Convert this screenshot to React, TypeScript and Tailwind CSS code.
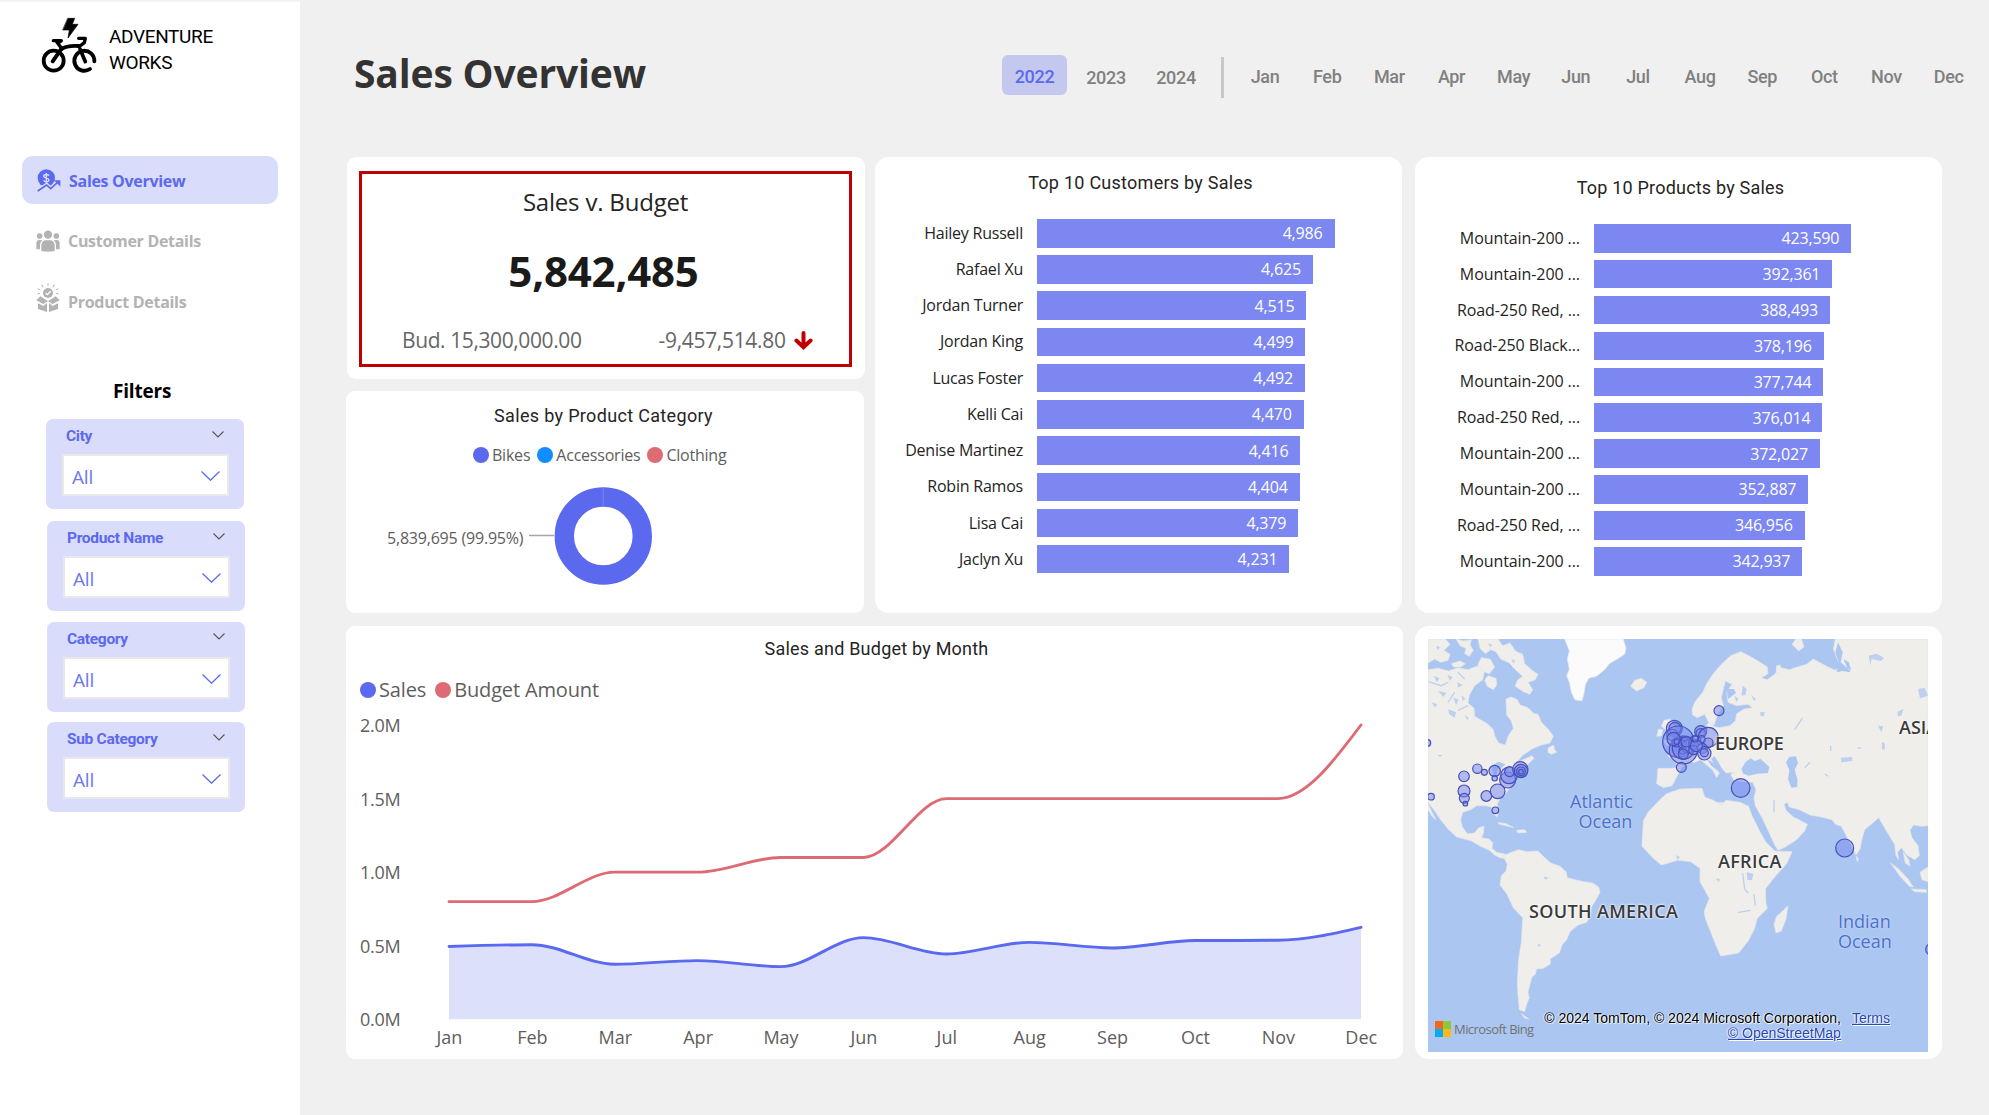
import React from 'react';

const MONTHS = ['Jan', 'Feb', 'Mar', 'Apr', 'May', 'Jun', 'Jul', 'Aug', 'Sep', 'Oct', 'Nov', 'Dec'];
const DIN = "font-['Roboto',sans-serif]";
const SEGOE = "font-['Open_Sans',sans-serif]";

/* ---------- Icons ---------- */

function BikeLogo() {
  return (
    <svg className="h-[60px] w-[60px]" viewBox="117 48 180 180" fill="none" stroke="#000" strokeLinecap="round" strokeLinejoin="round">
      <circle cx="161" cy="182" r="30" strokeWidth="11.5" />
      <path d="M283 184A30 30 0 1 0 270 207" strokeWidth="11.5" />
      <path d="M158 184L183 148Q200 136 236 138" strokeWidth="11.5" />
      <path d="M160 122H184L179 126L170 125L186 147" strokeWidth="10" />
      <path d="M236 115H256L253 128L240 138" strokeWidth="10" />
      <path d="M240 147L256 185" strokeWidth="11" />
      <path d="M204 55H224L217 73H234L204 114L208 90H189Z" fill="#000" strokeWidth="2" />
    </svg>
  );
}

function SalesIcon() {
  return (
    <svg className="h-6 w-6" viewBox="0 0 72 72" fill="none">
      <circle cx="28" cy="27" r="26" fill="#5b69ee" />
      <path d="M36 20C34 15 20 15 20 22C20 29 36 26 36 33C36 40 22 40 20 34M28 12V42" stroke="#dadcfb" strokeWidth="4" />
      <path d="M2 66L29 48L41 59L61 39" stroke="#dadcfb" strokeWidth="13" />
      <path d="M2 66L29 48L41 59L61 41" stroke="#5b69ee" strokeWidth="5" />
      <path d="M49 34H70V53L63 46L57 40Z" fill="#5b69ee" />
    </svg>
  );
}

function PeopleIcon() {
  return (
    <svg className="-ml-px h-6 w-6" viewBox="0 0 72 72" fill="#b3b3b3">
      <circle cx="36" cy="17" r="12.5" />
      <circle cx="11" cy="21" r="8.5" />
      <circle cx="61" cy="21" r="8.5" />
      <path d="M16 66V49Q18 34 30 34H42Q54 34 56 49V66Q36 70 16 66Z" />
      <path d="M1 61V41Q2 33 9 33H18Q12 41 12 50V61Z" />
      <path d="M71 61V41Q70 33 63 33H54Q60 41 60 50V61Z" />
    </svg>
  );
}

function BoxIcon() {
  return (
    <svg className="-mt-2 -ml-px h-[30px] w-6" viewBox="0 0 72 90" fill="#b3b3b3">
      <circle cx="36" cy="30" r="15" />
      <path d="M29 30L34 35L44 25" fill="none" stroke="#fff" strokeWidth="4" />
      <path d="M36 9V1M21 13L17 5M51 13L55 5M13 21L5 17M59 21L67 17M12 32H5M60 32H67" stroke="#b3b3b3" strokeWidth="3" />
      <path d="M36 55L13 40L1 52L22 63Z" />
      <path d="M36 55L59 40L71 52L50 63Z" />
      <path d="M6 61L22 69L33 60V87L6 78Z" />
      <path d="M66 61L50 69L39 60V87L66 78Z" />
    </svg>
  );
}

/* ---------- Sidebar ---------- */

function NavItem({ icon, label, active }: { icon: React.ReactNode; label: string; active?: boolean }) {
  return (
    <div
      className={`${SEGOE} flex h-12 w-64 items-center gap-2 rounded-[11px] pt-px pl-[15px] text-[16px] font-bold tracking-[-0.3px] ${
        active ? 'bg-[#dadcfb] text-[#5b69ee]' : 'text-[#b3b3b3]'
      }`}
    >
      {icon}
      <span>{label}</span>
    </div>
  );
}

function Filter({ label }: { label: string }) {
  return (
    <div className="h-[90px] w-[198px] rounded-[7px] bg-[#dadcfb] pt-[9px] pr-[15px] pl-4">
      <div className="flex h-4 items-center justify-between pr-[5px] pl-1">
        <span className={`${DIN} text-[15.5px] leading-4 font-bold tracking-[-0.3px] text-[#5b69ee]`}>{label}</span>
        <svg className="mb-1 h-[7px] w-3" viewBox="0 0 12 7" fill="none" stroke="#555" strokeWidth="1.1">
          <path d="M.5.5L6 6L11.5.5" />
        </svg>
      </div>
      <div className="mt-[10px] flex h-[42px] items-center justify-between border-2 border-[#e9e9ec] bg-white pr-[7px] pl-2">
        <span className={`${SEGOE} pt-1 text-[19px] leading-6 tracking-[-0.2px] text-[#6b78f0]`}>All</span>
        <svg className="mt-0.5 h-[10px] w-[19px]" viewBox="0 0 19 10" fill="none" stroke="#5b69ee" strokeWidth="1.3">
          <path d="M.5.5L9.5 9.2L18.5.5" />
        </svg>
      </div>
    </div>
  );
}

function Sidebar() {
  return (
    <aside className="flex h-full w-[300px] shrink-0 flex-col border-t-2 border-[#f3f3f3] bg-white">
      <div className="mt-[14px] ml-[39px] flex items-start gap-[10px]">
        <BikeLogo />
        <div className={`${DIN} pt-2 text-[19px] leading-[26px] tracking-[-0.35px] text-black`}>
          ADVENTURE
          <br />
          WORKS
        </div>
      </div>
      <nav className="mt-20 ml-[22px] flex flex-col gap-[12.5px]">
        <NavItem active icon={<SalesIcon />} label="Sales Overview" />
        <NavItem icon={<PeopleIcon />} label="Customer Details" />
        <NavItem icon={<BoxIcon />} label="Product Details" />
      </nav>
      <h2 className={`${SEGOE} mt-[54px] ml-[113px] text-[19px] leading-6 font-bold tracking-[-0.2px] text-black`}>Filters</h2>
      <div className="mt-4 ml-[46px] flex flex-col">
        <Filter label="City" />
        <div className="mt-3 ml-px flex flex-col gap-[10.5px]">
          <Filter label="Product Name" />
          <Filter label="Category" />
          <Filter label="Sub Category" />
        </div>
      </div>
    </aside>
  );
}

/* ---------- Header ---------- */

function Header() {
  return (
    <header className="flex h-[157px] shrink-0 items-start pl-[54px]">
      <h1 className={`${SEGOE} mt-[47px] w-[648px] text-[39px] leading-[52px] font-bold tracking-[-0.15px] text-[#333]`}>Sales Overview</h1>
      <div className={`${DIN} mt-[55px] flex text-[18px] font-medium tracking-[-0.35px] text-[#808080]`}>
        <div className="flex h-10 w-[65px] items-center justify-center rounded-md bg-[#c4c8ef] pt-[3px] text-[#5b69ee]">2022</div>
        <div className="flex h-10 w-[78px] items-center justify-center pt-1">2023</div>
        <div className="flex h-10 w-[62px] items-center justify-center pt-1">2024</div>
        <div className="mt-[2px] ml-[14px] h-[41px] w-[3px] bg-[#c8c8c8]" />
        <div className="ml-[10px] flex">
          {MONTHS.map((m) => (
            <div key={m} className="flex h-10 w-[62.15px] items-center justify-center pt-[3px]">
              {m}
            </div>
          ))}
        </div>
      </div>
    </header>
  );
}

/* ---------- Cards ---------- */

function KpiCard() {
  return (
    <section className="ml-px h-[222px] w-[518px] rounded-[9px] bg-white pt-[14px] pl-3">
      <div className={`${SEGOE} flex h-[196px] w-[493px] flex-col items-center border-3 border-[#c00000]`}>
        <div className="mt-3 text-[24px] leading-8 tracking-[-0.2px] text-[#252423]">Sales v. Budget</div>
        <div className="mt-[23px] pr-1 text-[42px] leading-[60px] font-bold tracking-[-0.2px] text-[#1a1a1a]">5,842,485</div>
        <div className="mt-[23px] flex w-full items-center pl-10 text-[21px] leading-8 tracking-[-0.4px] text-[#666]">
          <span>Bud. 15,300,000.00</span>
          <span className="ml-[77px] tracking-[-0.32px]">-9,457,514.80</span>
          <svg className="ml-2 h-[19px] w-[19px]" viewBox="0 0 19 19" fill="none" stroke="#c00000" strokeWidth="4" strokeLinecap="round">
            <path d="M9.5 2V15M2.4 9.5L9.5 16.2L16.6 9.5" />
          </svg>
        </div>
      </div>
    </section>
  );
}

function Legend({ color, label }: { color: string; label: string }) {
  return (
    <span className="flex items-center gap-[3px]">
      <span className={`size-4 rounded-full ${color}`} />
      <span>{label}</span>
    </span>
  );
}

function CategoryCard() {
  return (
    <section className="h-[222px] w-[518px] rounded-[9px] bg-white">
      <h3 className={`${DIN} pt-[13px] pr-[3px] text-center text-[18px] leading-6 tracking-[0.33px] text-[#252423]`}>Sales by Product Category</h3>
      <div className={`${SEGOE} mt-[15px] ml-[127px] flex gap-[7px] text-[16px] leading-6 tracking-[-0.22px] text-[#605e5c]`}>
        <Legend color="bg-[#5b69ee]" label="Bikes" />
        <Legend color="bg-[#118dff]" label="Accessories" />
        <Legend color="bg-[#de6a73]" label="Clothing" />
      </div>
      <div className="mt-[19px] flex items-center pl-[41px]">
        <span className={`${SEGOE} w-[142px] pt-[3px] text-[16px] tracking-[-0.2px] text-[#605e5c]`}>5,839,695 (99.95%)</span>
        <svg className="h-[100px] w-[125px]" viewBox="0 0 125 100" fill="none">
          <path d="M0 49.5H25" stroke="#a6a6a6" strokeWidth="1.5" />
          <circle cx="74.3" cy="50" r="39" stroke="#5b69ee" strokeWidth="19.4" />
          <path d="M74.3 1.5V20.5" stroke="#6d86f3" strokeWidth="1" />
        </svg>
      </div>
    </section>
  );
}

type Row = [string, number];

const CUSTOMERS: Row[] = [
  ['Hailey Russell', 4986],
  ['Rafael Xu', 4625],
  ['Jordan Turner', 4515],
  ['Jordan King', 4499],
  ['Lucas Foster', 4492],
  ['Kelli Cai', 4470],
  ['Denise Martinez', 4416],
  ['Robin Ramos', 4404],
  ['Lisa Cai', 4379],
  ['Jaclyn Xu', 4231],
];

const PRODUCTS: Row[] = [
  ['Mountain-200 ...', 423590],
  ['Mountain-200 ...', 392361],
  ['Road-250 Red, ...', 388493],
  ['Road-250 Black...', 378196],
  ['Mountain-200 ...', 377744],
  ['Road-250 Red, ...', 376014],
  ['Mountain-200 ...', 372027],
  ['Mountain-200 ...', 352887],
  ['Road-250 Red, ...', 346956],
  ['Mountain-200 ...', 342937],
];

function BarRow({ row, max, full, labelClass }: { row: Row; max: number; full: number; labelClass: string }) {
  const [label, value] = row;
  return (
    <div className="flex h-[28.5px] items-center">
      <span className={`${labelClass} shrink-0 pb-px text-right whitespace-nowrap text-[#252423]`}>{label}</span>
      <div
        className="flex h-full items-center justify-end bg-[#7c87f1] pr-[12px] tracking-[-0.18px] text-white"
        style={{ width: (value / max) * full }}
      >
        {value.toLocaleString('en-US')}
      </div>
    </div>
  );
}

function CustomersCard() {
  return (
    <section className="h-[456px] w-[527px] rounded-[14px] bg-white">
      <h3 className={`${DIN} pt-[14px] pl-1 text-center text-[18px] leading-6 tracking-[0.26px] text-[#252423]`}>Top 10 Customers by Sales</h3>
      <div className={`${SEGOE} mt-6 flex flex-col gap-[7.73px] text-[16px] leading-6`}>
        {CUSTOMERS.map((r) => (
          <BarRow key={r[0]} row={r} max={4986} full={297.5} labelClass="w-[148px] mr-[14px] tracking-[-0.22px]" />
        ))}
      </div>
    </section>
  );
}

function ProductsCard() {
  return (
    <section className="h-[456px] w-[527px] rounded-[14px] bg-white">
      <h3 className={`${DIN} pt-[19px] pl-[4px] text-center text-[18px] leading-6 tracking-[0.2px] text-[#252423]`}>Top 10 Products by Sales</h3>
      <div className={`${SEGOE} mt-6 flex flex-col gap-[7.4px] text-[16px] leading-6`}>
        {PRODUCTS.map((r, i) => (
          <BarRow key={i} row={r} max={423590} full={257.3} labelClass="w-[165px] mr-[14px] tracking-[-0.08px]" />
        ))}
      </div>
    </section>
  );
}

/* ---------- Line chart ---------- */

const BUDGET = [0.8, 0.8, 1.0, 1.0, 1.1, 1.1, 1.5, 1.5, 1.5, 1.5, 1.5, 2.0];
const SALES = [0.495, 0.507, 0.374, 0.399, 0.358, 0.555, 0.444, 0.523, 0.485, 0.535, 0.537, 0.625];
const PLOT_W = 912;
const PLOT_H = 294.3;

/* Monotone cubic interpolation through evenly spaced points. */
function curve(values: number[]): string {
  const dx = PLOT_W / (values.length - 1);
  const y = values.map((v) => PLOT_H - (v / 2) * PLOT_H);
  const n = y.length;
  const s = y.slice(1).map((v, i) => (v - y[i]) / dx);
  const t = y.map((_, i) => {
    if (i === 0 || i === n - 1) return 0;
    const a = s[i - 1];
    const b = s[i];
    if (a * b <= 0) return 0;
    return Math.sign(a) * 2 * Math.min(Math.abs(a), Math.abs(b), Math.abs(a + b) / 4);
  });
  t[0] = (3 * s[0] - t[1]) / 2;
  t[n - 1] = (3 * s[n - 2] - t[n - 2]) / 2;
  let d = `M0 ${y[0]}`;
  for (let i = 1; i < n; i++) {
    const x0 = (i - 1) * dx;
    const x1 = i * dx;
    d += `C${x0 + dx / 3} ${y[i - 1] + (t[i - 1] * dx) / 3} ${x1 - dx / 3} ${y[i] - (t[i] * dx) / 3} ${x1} ${y[i]}`;
  }
  return d;
}

function LineCard() {
  const sales = curve(SALES);
  return (
    <section className="h-[433px] w-[1057px] rounded-[9px] bg-white">
      <h3 className={`${DIN} pt-[11px] pl-[4px] text-center text-[18px] leading-6 tracking-[0.22px] text-[#252423]`}>Sales and Budget by Month</h3>
      <div className={`${SEGOE} mt-[15px] ml-[14px] flex gap-[9px] text-[20px] leading-7 tracking-[-0.15px] text-[#605e5c]`}>
        <Legend color="bg-[#5b69ee]" label="Sales" />
        <Legend color="bg-[#de6a73]" label="Budget Amount" />
      </div>
      <div className={`${SEGOE} mt-[9px] flex text-[18px] text-[#605e5c]`}>
        <div className="flex h-[318px] w-[103px] flex-col justify-between pl-[14px] leading-6 tracking-[-0.3px]">
          {['2.0M', '1.5M', '1.0M', '0.5M', '0.0M'].map((t) => (
            <span key={t}>{t}</span>
          ))}
        </div>
        <svg className="mt-[12px] h-[295px] w-[912px] overflow-visible" viewBox="0 0 912 295" fill="none">
          <path d={`${sales}V${PLOT_H}H0Z`} fill="#dde0fb" />
          <path d={curve(BUDGET)} stroke="#de6a73" strokeWidth="2.9" strokeLinecap="round" />
          <path d={sales} stroke="#5b69ee" strokeWidth="2.9" strokeLinecap="round" />
        </svg>
      </div>
      <div className={`${SEGOE} -mt-[6px] ml-[62px] flex text-[18px] leading-6 text-[#605e5c]`}>
        {MONTHS.map((m) => (
          <span key={m} className="w-[82.9px] text-center">
            {m}
          </span>
        ))}
      </div>
    </section>
  );
}

/* ---------- Map ---------- */

type Bubble = [number, number, number];

const AMERICAS: Bubble[] = [
  [-2, 312, 10], [108, 412, 16], [148, 389, 14], [169, 400, 9], [200, 396, 17], [200, 418, 8], [108, 456, 18],
  [109, 478, 15], [112, 494, 7], [9, 473, 10], [175, 471, 16], [209, 457, 22], [202, 514, 10], [239, 423, 24],
  [243, 409, 25], [245, 398, 15], [277, 391, 23], [279, 396, 20], [279, 397, 13], [279, 398, 7],
];

const EASTERN: Bubble[] = [
  [739, 268, 24], [741, 268, 18], [733, 288, 17], [751, 308, 47], [766, 333, 42], [766, 328, 33], [746, 310, 14],
  [763, 315, 12], [763, 335, 10], [781, 323, 20], [818, 278, 18], [818, 283, 14], [841, 295, 30], [801, 308, 18],
  [796, 318, 15], [821, 301, 11], [841, 311, 14], [823, 328, 15], [829, 343, 20], [829, 341, 12], [796, 333, 14],
  [760, 385, 15], [873, 215, 15], [938, 447, 28], [1250, 627, 27], [1510, 931, 17], [737, 300, 20], [746, 308, 8],
  [775, 308, 16], [805, 320, 18], [766, 345, 15], [801, 300, 9],
];

function WorldMap() {
  return (
    <svg className="size-full" viewBox="0 0 1500 1239">
      <rect width="1500" height="1239" fill="#abc6f1" />
      <g fill="#efeeeb" stroke="#e6e6ea" strokeWidth="2" strokeLinejoin="round">
        {/* North and Central America */}
        <path d="M0 92L30 88L62 96L90 86L120 92L150 80L170 92L164 122L140 140L124 168L120 192L138 208L140 232L178 254L196 272L200 290L212 312L232 318L240 292L256 268L250 246L236 228L234 180L250 174L268 182L276 198L300 206L318 224L330 226L340 250L362 272L376 292L366 312L340 318L312 330L282 350L262 376L282 364L312 350L318 358L298 378L282 382L290 402L262 412L250 440L236 460L216 480L208 494L212 522L206 534L196 524L190 504L172 500L146 500L128 512L104 520L98 542L102 562L118 584L140 582L152 566L168 562L166 584L160 596L182 600L194 610L192 628L206 640L226 644L246 652L240 660L216 656L200 648L184 634L158 622L130 606L110 600L86 594L60 570L36 540L16 510L0 490Z" />
        <path d="M0 492L12 520L24 542L14 534L0 512Z" />
        {/* Canadian Arctic islands */}
        <path d="M0 0H52L66 16L48 34L66 46L60 64L38 70L20 60L0 72Z M84 0L106 6L130 2L126 18L136 34L124 52L110 44L114 28L96 20Z M150 0H210L224 20L246 12L262 36L284 46L290 74L312 94L330 106L322 122L300 130L314 152L306 166L286 158L262 142L268 124L284 112L262 92L244 72L218 60L204 38L188 32L172 44L156 28Z M70 74L96 66L112 74L98 84L78 84Z M180 110L204 118L206 138L196 152L178 142L170 124Z M160 56L186 60L200 84L184 104L162 96L150 76Z" />
        <path d="M360 328L376 318L380 332L386 340L370 346L360 340Z M210 550L234 554L258 566L240 562L214 556Z M266 574L290 572L296 580L270 582Z" />
        {/* Greenland */}
        <path fill="#fbfbfb" d="M410 0L424 36L418 60L424 90L416 110L424 130L430 160L440 182L462 186L468 164L472 138L482 118L506 112L530 92L544 74L568 60L590 46L594 28L586 0Z" />
        <path d="M608 142L620 124L640 118L656 130L648 146L626 156Z" />
        {/* South America */}
        <path d="M236 646L250 640L272 632L296 638L330 636L346 652L368 672L396 682L414 698L418 716L440 722L468 728L494 732L512 744L516 760L502 786L490 804L486 832L476 850L450 858L426 878L416 902L402 918L394 942L366 960L368 974L346 988L326 990L322 1006L312 1014L306 1036L300 1060L304 1076L296 1096L290 1118L274 1112L270 1070L268 1030L272 960L280 910L284 836L256 806L236 764L216 738L220 710L234 696L238 676L230 660Z" />
        <path d="M280 1124L302 1140L290 1138Z" />
        {/* Europe and Asia */}
        <path d="M792 212L800 190L824 160L836 134L856 104L880 76L908 50L938 38L966 52L990 66L1018 84L1020 104L1000 116L1018 122L1042 104L1052 84L1084 92L1108 84L1136 76L1156 60L1178 72L1200 84L1222 94L1238 82L1228 60L1216 30L1222 0H1500V560L1482 562L1456 558L1446 574L1452 596L1470 620L1474 650L1460 662L1436 648L1420 626L1408 640L1412 662L1404 650L1400 616L1384 590L1372 570L1352 536L1334 552L1310 572L1302 600L1296 630L1284 648L1270 620L1254 588L1240 562L1222 556L1212 542L1180 534L1146 528L1114 512L1084 504L1078 490L1068 496L1074 514L1096 534L1116 544L1138 556L1130 576L1106 602L1072 624L1050 634L1040 618L1022 578L1002 536L982 500L978 478L984 452L974 430L946 428L918 424L908 406L920 400L894 402L882 388L872 370L860 352L848 358L858 376L874 402L866 416L854 392L836 378L818 362L800 370L780 368L762 384L748 410L732 440L706 446L686 434L690 388L726 388L746 386L744 366L720 352L722 344L748 338L772 318L800 296L820 280L842 276L836 258L848 246L856 262L874 266L906 260L922 246L926 224L948 210L974 206L960 196L926 200L900 190L896 160L912 136L892 126L886 150L880 176L886 200L868 228L858 258L842 250L830 226L808 236L794 228Z" />
        <path d="M706 306L722 300L718 276L700 262L708 244L726 240L740 262L752 290L750 308L716 320Z M692 270L704 272L700 290L686 292Z" />
        <path d="M1092 16L1104 0H1120L1128 24L1112 36Z M1046 80L1058 78L1056 98L1044 102Z M868 490L890 492L886 498Z" />
        {/* Africa */}
        <path d="M700 478L716 464L756 450L822 448L830 474L856 484L880 498L894 484L936 490L962 502L972 530L996 578L1014 610L1040 636L1092 638L1076 674L1040 714L1012 750L1014 794L1018 808L988 838L980 868L962 904L932 942L878 951L862 914L832 838L828 818L844 778L816 728L816 688L788 668L748 664L714 674L700 678L676 658L642 622L646 546L660 520Z" />
        <path d="M1080 800L1074 840L1060 876L1044 882L1038 856L1046 832L1060 820Z" />
        {/* Indian Ocean and south-east Asia */}
        <path d="M1284 652L1292 660L1288 668Z M1388 672L1412 690L1440 720L1456 744L1444 742L1416 712Z M1450 750L1494 752L1496 760L1460 758Z M1476 700L1500 684V728L1482 722Z M1426 640L1442 662L1446 682L1432 672Z" />
      </g>
      {/* Inland water */}
      <g fill="#abc6f1">
        <path d="M940 390L952 370L968 358L980 366L998 360L1024 384L1020 402L990 404L962 410L946 404Z" />
        <path d="M1074 370L1084 354L1104 352L1110 372L1100 392L1108 420L1108 444L1090 446L1080 420L1084 394Z" />
        <path d="M966 504L978 516L1004 562L1032 604L1038 624L1020 610L996 574Z" />
        <path d="M1230 10L1244 40L1238 70L1264 92L1268 100L1244 96L1226 100L1232 70L1222 40Z M1246 60L1262 70L1270 94L1258 86Z" />
        <path d="M896 150L918 150L924 162L900 180Z" />
        <path d="M190 380L212 368L232 376L220 388L208 390L206 410L198 412Z M222 394L244 386L238 396Z" />
        <path d="M836 360L862 374L880 402L870 396L850 380Z" />
      </g>
      <g fill="#bfd0ee">
        <path d="M956 700L976 704L972 724L958 722Z M864 718L876 720L872 730Z M1322 50L1346 44L1368 56L1360 66L1330 60L1328 80Z M1238 356L1272 354L1274 366L1240 370Z M1350 260L1366 262L1360 280Z M1408 218L1426 210L1420 230L1410 232Z M1470 150L1490 146L1500 170L1476 178Z M1362 310L1370 312V332L1362 330Z M996 220L1010 218L1008 232H998Z M944 140L956 150L952 168L940 170Z M920 170L932 180L924 190Z M970 168L984 180L978 186Z" />
        <path d="M18 110L34 118L26 130Z M58 108L74 114L66 126Z M88 130L104 138L90 146Z M30 156L56 162L46 174Z M76 176L92 182L84 198Z M100 168L112 180L104 186Z M12 190L28 196L20 206Z M60 210L84 220L80 236L64 226Z M110 228L122 236L118 244Z M24 20L36 24L30 34Z M180 12L194 18L186 24Z M250 60L262 66L256 74Z M346 712L362 716L352 722Z M328 914L340 918L332 924Z M744 648L756 654L748 664Z" />
      </g>
      <g fill="none" stroke="#bfd0ee" strokeWidth="4">
        <path d="M944 702L950 750L960 762 M978 766L982 800 M930 820L968 814 M1038 484V520 M1288 326L1300 328 M1208 320V336 M1146 370L1130 386 M1190 404L1200 412 M30 350H42 M0 128L40 140L60 130 M90 100L110 120 M60 190L80 160 M120 200L90 214 M1100 272L1124 236" />
      </g>
      <g fill="#7683ee" fillOpacity="0.5" stroke="#4650b8" strokeWidth="3.5">
        {AMERICAS.concat(EASTERN).map(([x, y, r], i) => (
          <circle key={i} cx={x} cy={y} r={r} />
        ))}
      </g>
    </svg>
  );
}

function MapCard() {
  const halo = '[text-shadow:0_0_2px_#fff,0_0_3px_#fff]';
  const region = `absolute text-[18px] leading-5 font-semibold whitespace-nowrap text-[#3a3a3a] ${halo}`;
  const ocean = 'absolute text-[18px] leading-5 text-center text-[#4a70cc] [text-shadow:0_0_2px_#dce6fb]';
  return (
    <section className="h-[433px] w-[527px] rounded-[14px] bg-white pt-[13px] pl-[13px]">
      <div className={`${SEGOE} relative h-[413px] w-[500px] overflow-hidden`}>
        <WorldMap />
        <span className={`${region} top-[94px] left-[287px] tracking-[-0.3px]`}>EUROPE</span>
        <span className={`${region} top-[78px] left-[471px]`}>ASIA</span>
        <span className={`${region} top-[212px] left-[290px] tracking-[0.3px]`}>AFRICA</span>
        <span className={`${region} top-[262px] left-[101px] tracking-[0.35px]`}>SOUTH AMERICA</span>
        <div className={`${ocean} top-[152px] left-[142px]`}>
          Atlantic
          <br />
          <span className="pl-2">Ocean</span>
        </div>
        <div className={`${ocean} top-[272px] left-[410px] text-left`}>
          Indian
          <br />
          Ocean
        </div>
        <div className="absolute top-[382px] left-[7px] flex items-center gap-[3px]">
          <div className="grid size-4 grid-cols-2">
            <span className="bg-[#f26622]" />
            <span className="bg-[#8dc63f]" />
            <span className="bg-[#00aeef]" />
            <span className="bg-[#fdb913]" />
          </div>
          <span className="text-[13px] leading-4 font-medium tracking-[-0.56px] whitespace-nowrap text-[#737373]">Microsoft Bing</span>
        </div>
        <div className="absolute top-[372px] right-[38px] grid grid-cols-[auto_auto] gap-x-[11px] font-['Liberation_Sans',sans-serif] text-[14px] leading-[15px] whitespace-nowrap text-black [text-shadow:1px_1px_1px_#fff,-1px_0_1px_#fff]">
          <span>© 2024 TomTom, © 2024 Microsoft Corporation,</span>
          <a className="text-[#2a46b0] underline">Terms</a>
          <a className="text-right text-[#2a46b0] underline">© OpenStreetMap</a>
        </div>
      </div>
    </section>
  );
}

export default function App() {
  return (
    <div className="flex h-[1115px] w-[1989px] overflow-hidden bg-[#f0f0f0]">
      <Sidebar />
      <main className="flex min-w-0 flex-1 flex-col">
        <Header />
        <div className="flex flex-col gap-[13px] pl-[46px]">
          <div className="flex">
            <div className="flex w-[529px] flex-col gap-3">
              <KpiCard />
              <CategoryCard />
            </div>
            <CustomersCard />
            <div className="ml-[13px]">
              <ProductsCard />
            </div>
          </div>
          <div className="flex gap-3">
            <LineCard />
            <MapCard />
          </div>
        </div>
      </main>
    </div>
  );
}
